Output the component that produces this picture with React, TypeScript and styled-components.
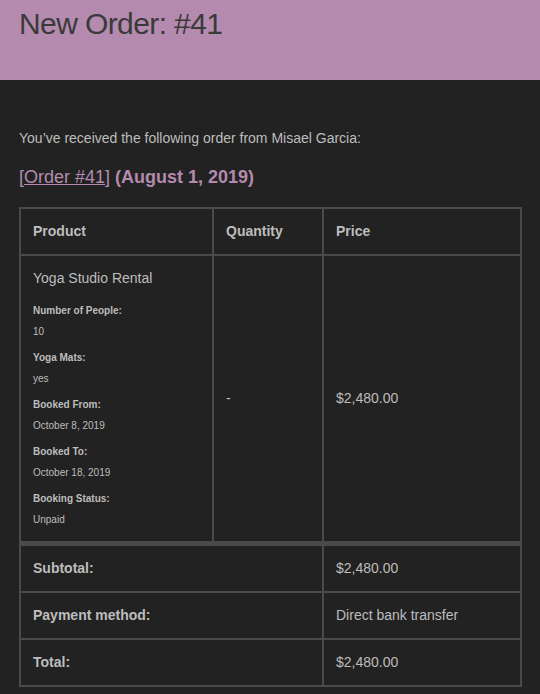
import React from 'react';
import styled, { createGlobalStyle } from 'styled-components';

const GlobalStyle = createGlobalStyle`
    * {
        box-sizing: border-box;
    }
    body {
        margin: 0;
        background: #222222;
        font-family: "Liberation Sans", Arial, Helvetica, sans-serif;
    }
`;

const BORDER = '#4a4a4a';
const TEXT = '#bdbdbd';
const PURPLE = '#b48bae';

interface MetaItem {
    label: string;
    value: string;
}

const meta: MetaItem[] = [
    { label: 'Number of People:', value: '10' },
    { label: 'Yoga Mats:', value: 'yes' },
    { label: 'Booked From:', value: 'October 8, 2019' },
    { label: 'Booked To:', value: 'October 18, 2019' },
    { label: 'Booking Status:', value: 'Unpaid' },
];

const totals = [
    { label: 'Subtotal:', value: '$2,480.00' },
    { label: 'Payment method:', value: 'Direct bank transfer' },
    { label: 'Total:', value: '$2,480.00' },
];

const Page = styled.div`
    background: #222222;
    min-height: 694px;
`;

const Header = styled.div`
    background: ${PURPLE};
    padding: 6px 19px 38px;
`;

const Title = styled.h1`
    margin: 0;
    font-size: 30px;
    line-height: 36px;
    font-weight: 400;
    letter-spacing: -0.6px;
    color: #3a3a3a;
`;

const Content = styled.div`
    padding: 48px 18px 40px 19px;
    color: ${TEXT};
`;

const Intro = styled.p`
    margin: 0 0 17px;
    font-size: 14px;
    line-height: 21px;
`;

const OrderHeading = styled.h2`
    margin: 0 0 18px;
    font-size: 18px;
    line-height: 23px;
    font-weight: 700;
    color: ${PURPLE};
`;

const OrderLink = styled.a`
    font-weight: 400;
    color: ${PURPLE};
    text-decoration: underline;
`;

const Table = styled.table`
    width: 503px;
    border: 1px solid ${BORDER};
    border-collapse: separate;
    border-spacing: 0;
    table-layout: fixed;
    color: ${TEXT};
`;

const HeadCell = styled.th<{ $width?: number }>`
    width: ${p => (p.$width ? `${p.$width}px` : 'auto')};
    border: 1px solid ${BORDER};
    padding: 12px;
    text-align: left;
    font-size: 14px;
    line-height: 21px;
    font-weight: 700;
`;

const Cell = styled.td<{ $top?: boolean }>`
    border: 1px solid ${BORDER};
    padding: 12px;
    text-align: left;
    vertical-align: ${p => (p.$top ? 'top' : 'middle')};
    font-size: 14px;
    line-height: 21px;
`;

const FootLabel = styled.th<{ $first?: boolean }>`
    border: 1px solid ${BORDER};
    border-top-width: ${p => (p.$first ? '4px' : '1px')};
    padding: 12px;
    text-align: left;
    font-size: 14px;
    line-height: 21px;
    font-weight: 700;
`;

const FootValue = styled.td<{ $first?: boolean }>`
    border: 1px solid ${BORDER};
    border-top-width: ${p => (p.$first ? '4px' : '1px')};
    padding: 12px;
    text-align: left;
    font-size: 14px;
    line-height: 21px;
`;

const MetaList = styled.ul`
    list-style: none;
    margin: 14px 0 1px;
    padding: 0;
    display: flex;
    flex-direction: column;
    gap: 10px;
`;

const MetaRow = styled.li`
    display: flex;
    flex-direction: column;
    gap: 5px;
`;

const MetaLabel = styled.strong`
    font-size: 10px;
    line-height: 16px;
    font-weight: 700;
`;

const MetaValue = styled.p`
    margin: 0;
    font-size: 10px;
    line-height: 16px;
`;

const App = () => (
    <Page>
        <GlobalStyle />
        <Header>
            <Title>New Order: #41</Title>
        </Header>
        <Content>
            <Intro>You’ve received the following order from Misael Garcia:</Intro>
            <OrderHeading>
                <OrderLink href="#">[Order #41]</OrderLink> (August 1, 2019)
            </OrderHeading>
            <Table>
                <thead>
                    <tr>
                        <HeadCell $width={193}>Product</HeadCell>
                        <HeadCell $width={110}>Quantity</HeadCell>
                        <HeadCell $width={198}>Price</HeadCell>
                    </tr>
                </thead>
                <tbody>
                    <tr>
                        <Cell $top>
                            Yoga Studio Rental
                            <MetaList>
                                {meta.map(m => (
                                    <MetaRow key={m.label}>
                                        <MetaLabel>{m.label}</MetaLabel>
                                        <MetaValue>{m.value}</MetaValue>
                                    </MetaRow>
                                ))}
                            </MetaList>
                        </Cell>
                        <Cell>-</Cell>
                        <Cell>$2,480.00</Cell>
                    </tr>
                </tbody>
                <tfoot>
                    {totals.map((t, i) => (
                        <tr key={t.label}>
                            <FootLabel colSpan={2} $first={i === 0}>
                                {t.label}
                            </FootLabel>
                            <FootValue $first={i === 0}>{t.value}</FootValue>
                        </tr>
                    ))}
                </tfoot>
            </Table>
        </Content>
    </Page>
);

export default App;
